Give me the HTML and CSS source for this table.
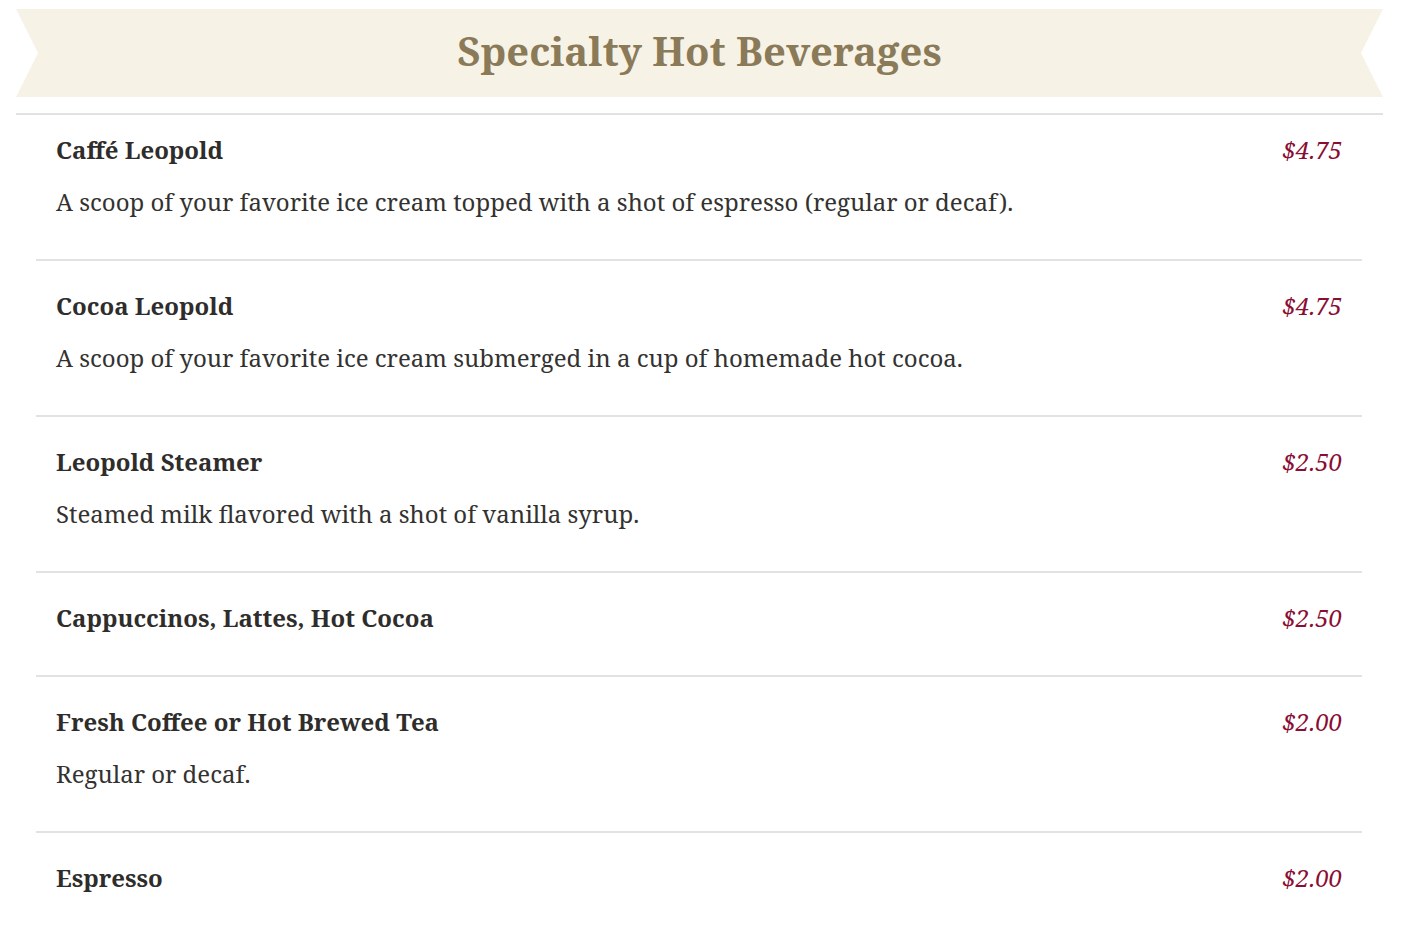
FILE: index.html
```html
<!DOCTYPE html>
<html lang="en">
<head>
<meta charset="utf-8">
<title>Specialty Hot Beverages</title>
<link rel="stylesheet" href="styles.css">
</head>
<body>
<section class="menu">
  <header class="menu-header">
    <h1 class="banner">Specialty Hot Beverages</h1>
  </header>
  <ul class="items">
    <li class="item">
      <div class="item-head"><h2 class="name">Caffé Leopold</h2><span class="price">$4.75</span></div>
      <p class="desc">A scoop of your favorite ice cream topped with a shot of espresso (regular or decaf).</p>
    </li>
    <li class="item">
      <div class="item-head"><h2 class="name">Cocoa Leopold</h2><span class="price">$4.75</span></div>
      <p class="desc">A scoop of your favorite ice cream submerged in a cup of homemade hot cocoa.</p>
    </li>
    <li class="item">
      <div class="item-head"><h2 class="name">Leopold Steamer</h2><span class="price">$2.50</span></div>
      <p class="desc">Steamed milk flavored with a shot of vanilla syrup.</p>
    </li>
    <li class="item">
      <div class="item-head"><h2 class="name">Cappuccinos, Lattes, Hot Cocoa</h2><span class="price">$2.50</span></div>
    </li>
    <li class="item">
      <div class="item-head"><h2 class="name">Fresh Coffee or Hot Brewed Tea</h2><span class="price">$2.00</span></div>
      <p class="desc">Regular or decaf.</p>
    </li>
    <li class="item">
      <div class="item-head"><h2 class="name">Espresso</h2><span class="price">$2.00</span></div>
    </li>
  </ul>
</section>
</body>
</html>
```
FILE: styles.css
```css
html, body {
  margin: 0;
  padding: 0;
  background: #ffffff;
}
body {
  font-family: "Noto Serif", "DejaVu Serif", "Liberation Serif", serif;
  color: #333230;
  padding: 9px 19px 0 16px;
}
.menu {
  display: flex;
  flex-direction: column;
}
.menu-header {
  padding-bottom: 16px;
  border-bottom: 2px solid #e2e2e2;
}
.banner {
  margin: 0;
  height: 88px;
  padding-bottom: 6px;
  box-sizing: border-box;
  display: flex;
  align-items: center;
  justify-content: center;
  background: #f6f2e6;
  color: #8a7a58;
  font-size: 40px;
  font-weight: 700;
  clip-path: polygon(0 0, 100% 0, calc(100% - 22px) 50%, 100% 100%, 0 100%, 22px 50%);
}
.items {
  list-style: none;
  margin: 0 21px 0 20px;
  padding: 0;
}
.item {
  padding: 29px 20px 41px;
  border-top: 2px solid #e2e2e2;
  display: flex;
  flex-direction: column;
  gap: 20px;
}
.item:first-child {
  border-top: none;
  padding-top: 19px;
  padding-bottom: 41px;
}
.item-head {
  display: flex;
  justify-content: space-between;
  align-items: center;
  height: 32px;
}
.name {
  margin: 0;
  font-size: 24px;
  font-weight: 700;
  line-height: 32px;
  color: #2f2d2b;
}
.price {
  font-size: 24px;
  font-style: italic;
  line-height: 32px;
  color: #8a0d33;
}
.desc {
  margin: 0;
  font-size: 24px;
  line-height: 32px;
  color: #333230;
}
```
